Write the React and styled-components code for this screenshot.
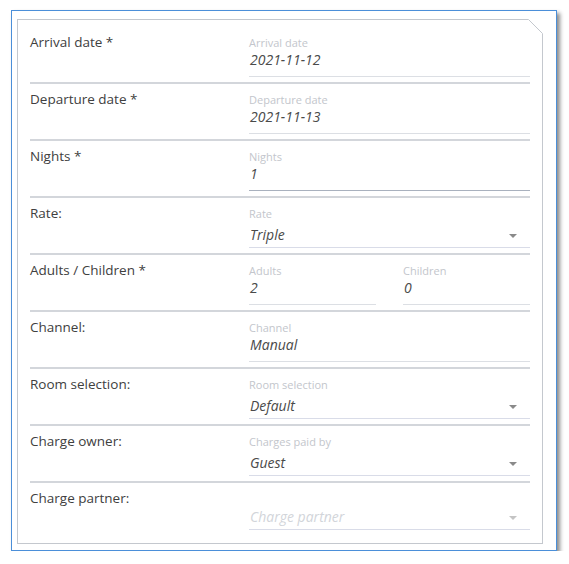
import React from "react";
import styled, { createGlobalStyle } from "styled-components";

const GlobalStyle = createGlobalStyle`
  html, body { margin: 0; padding: 0; background: #ffffff; }
  body { font-family: "Open Sans", "Noto Sans", Arial, sans-serif; }
  * { box-sizing: border-box; }
`;

const Page = styled.div`
  padding: 10px 0 0 11px;
`;

const Frame = styled.div`
  width: 546px;
  height: 541px;
  background: #ffffff;
  border: 1px solid #4b8fd9;
  box-shadow: 3px 3px 4px rgba(0, 0, 0, 0.45);
  padding: 8px 13px 6px 5px;
`;

const Card = styled.div`
  position: relative;
  height: 100%;
  border: 1px solid #c4c8ce;
  padding: 7px 12px 0 12px;
`;

const Corner = styled.svg`
  position: absolute;
  top: -1px;
  right: -1px;
  width: 16px;
  height: 16px;
`;

const Row = styled.div`
  display: grid;
  grid-template-columns: 219px 1fr;
  padding: 7px 0 5px;
  border-bottom: ${(p) => (p.$last ? "none" : "2px solid #d3d6db")};
`;

const RowLabel = styled.div`
  font-size: 13.5px;
  line-height: 16px;
  color: #404040;
`;

const Pair = styled.div`
  display: grid;
  grid-template-columns: 1fr 1fr;
  column-gap: 27px;
`;

const Field = styled.div`
  display: flex;
  flex-direction: column;
`;

const Caption = styled.div`
  margin-top: ${(p) => (p.$empty ? "0" : "2px")};
  height: ${(p) => (p.$empty ? "13px" : "14px")};
  font-size: 11px;
  line-height: 14px;
  color: #c3c6cc;
`;

const Value = styled.div`
  display: flex;
  align-items: center;
  justify-content: space-between;
  height: 27px;
  padding: ${(p) => (p.$select ? "4px 13px 2px 1px" : "0 1px 6px 1px")};
  font-size: 14px;
  line-height: 20px;
  font-style: italic;
  color: ${(p) => (p.$placeholder ? "#d2d5da" : "#4a4a4a")};
  border-bottom: 1px solid ${(p) => (p.$focus ? "#a9b1be" : p.$select ? "#d9dce8" : "#dcdfe4")};
`;

const Arrow = styled.span`
  width: 0;
  height: 0;
  border-left: 4px solid transparent;
  border-right: 4px solid transparent;
  border-top: 4px solid ${(p) => (p.$faint ? "#c4c4c4" : "#8a8a8a")};
  margin-top: 2px;
`;

function Input({ caption, value, focus, select, placeholder }) {
  return (
    <Field>
      <Caption $empty={!caption}>{caption}</Caption>
      <Value $focus={focus} $select={select} $placeholder={placeholder}>
        <span>{value}</span>
        {select && <Arrow $faint={placeholder} />}
      </Value>
    </Field>
  );
}

export default function App() {
  return (
    <>
      <GlobalStyle />
      <Page>
        <Frame>
          <Card>
            <Corner viewBox="0 0 16 16">
              <polygon points="1,0 16,0 16,15" fill="#ffffff" />
              <line x1="1.5" y1="0.5" x2="15.5" y2="14.5" stroke="#c4c8ce" strokeWidth="1" />
            </Corner>
            <Row>
              <RowLabel>Arrival date *</RowLabel>
              <Input caption="Arrival date" value="2021-11-12" />
            </Row>
            <Row>
              <RowLabel>Departure date *</RowLabel>
              <Input caption="Departure date" value="2021-11-13" />
            </Row>
            <Row>
              <RowLabel>Nights *</RowLabel>
              <Input caption="Nights" value="1" focus />
            </Row>
            <Row>
              <RowLabel>Rate:</RowLabel>
              <Input caption="Rate" value="Triple" select />
            </Row>
            <Row>
              <RowLabel>Adults / Children *</RowLabel>
              <Pair>
                <Input caption="Adults" value="2" />
                <Input caption="Children" value="0" />
              </Pair>
            </Row>
            <Row>
              <RowLabel>Channel:</RowLabel>
              <Input caption="Channel" value="Manual" />
            </Row>
            <Row>
              <RowLabel>Room selection:</RowLabel>
              <Input caption="Room selection" value="Default" select />
            </Row>
            <Row>
              <RowLabel>Charge owner:</RowLabel>
              <Input caption="Charges paid by" value="Guest" select />
            </Row>
            <Row $last>
              <RowLabel>Charge partner:</RowLabel>
              <Input caption="" value="Charge partner" select placeholder />
            </Row>
          </Card>
        </Frame>
      </Page>
    </>
  );
}
